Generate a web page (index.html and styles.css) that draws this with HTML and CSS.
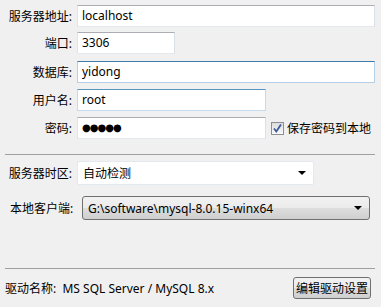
FILE: index.html
```html
<!DOCTYPE html>
<html lang="zh-CN">

<head>
    <meta charset="UTF-8">
    <meta name="viewport" content="width=device-width, initial-scale=1.0">
    <title>连接设置</title>
    <link rel="stylesheet" href="styles.css">
</head>

<body>
    <div class="panel">
        <div class="row row-host">
            <label class="lbl" for="host">服务器地址:</label>
            <div class="field wide" id="host">localhost</div>
        </div>
        <div class="row row-port">
            <label class="lbl" for="port">端口:</label>
            <div class="field short" id="port">3306</div>
        </div>
        <div class="row row-db">
            <label class="lbl" for="db">数据库:</label>
            <div class="field wide focus" id="db">yidong</div>
        </div>
        <div class="row row-user">
            <label class="lbl" for="user">用户名:</label>
            <div class="field mid hover" id="user">root</div>
        </div>
        <div class="row row-pass">
            <label class="lbl" for="pass">密码:</label>
            <div class="field mid dots" id="pass">●●●●●</div>
            <div class="check">
                <span class="box">
                    <svg width="11" height="11" viewBox="0 0 11 11">
                        <path d="M2 5.5 L4.3 8.5 L9 1.5" fill="none" stroke="#3b5a9a" stroke-width="1.8" />
                    </svg>
                </span>
                <span>保存密码到本地</span>
            </div>
        </div>

        <hr class="sep sep-top">

        <div class="row row-tz">
            <label class="lbl">服务器时区:</label>
            <div class="combo flat">
                <span>自动检测</span>
                <span class="arrow"></span>
            </div>
        </div>
        <div class="row row-client">
            <label class="lbl lbl-left">本地客户端:</label>
            <div class="combo raised">
                <span>G:\software\mysql-8.0.15-winx64</span>
                <span class="arrow"></span>
            </div>
        </div>

        <hr class="sep sep-bottom">

        <div class="footer">
            <span>驱动名称:&nbsp; MS SQL Server / MySQL 8.x</span>
            <button class="btn">编辑驱动设置</button>
        </div>
    </div>
</body>

</html>
```

FILE: styles.css
```css
html,
body {
    margin: 0;
    background: #f0f0f0;
}

body {
    font-family: "Segoe UI", "Noto Sans", "Noto Sans CJK SC", sans-serif;
    font-size: 12px;
    color: #000;
}

.panel {
    width: 381px;
    height: 307px;
    padding-top: 5px;
    box-sizing: border-box;
}

.row {
    display: flex;
    align-items: center;
}

.lbl {
    width: 67px;
    margin-left: 5px;
    margin-right: 5px;
    text-align: right;
    white-space: nowrap;
}

.lbl-left {
    width: 67px;
    margin-left: 10px;
    text-align: left;
}

.field {
    height: 22px;
    box-sizing: border-box;
    background: #fff;
    border: 1px solid #e3e9ef;
    border-top-color: #abadb3;
    border-left-color: #e2e3ea;
    border-right-color: #dbdfe6;
    padding: 0 4px;
    line-height: 20px;
}

.field.focus {
    border-color: #b5cfe7;
    border-top-color: #3d7bad;
}

.field.hover {
    border-color: #c5daed;
    border-top-color: #5794bf;
}

.wide {
    width: 298px;
}

.short {
    width: 98px;
}

.mid {
    width: 189px;
}

.dots {
    font-family: "DejaVu Sans", sans-serif;
    font-size: 10px;
    letter-spacing: -1px;
}

.row-host {
    margin-bottom: 5px;
}

.row-port {
    margin-bottom: 7px;
}

.row-db,
.row-user {
    margin-bottom: 6px;
}

.check {
    display: flex;
    align-items: center;
    margin-left: 5px;
    gap: 3px;
}

.box {
    width: 11px;
    height: 11px;
    border: 1px solid #8f8f8f;
    background: linear-gradient(#dcdcdc, #fafafa);
    display: flex;
}

.sep {
    margin: 0 6px 0 5px;
    border: 0;
    border-top: 1px solid #a0a0a0;
    height: 0;
}

.sep-top {
    margin-top: 15px;
    margin-bottom: 6px;
}

.combo {
    height: 24px;
    box-sizing: border-box;
    display: flex;
    align-items: center;
    justify-content: space-between;
    padding: 0 4px 0 5px;
}

.flat {
    width: 237px;
    background: #fff;
    border: 1px solid #e3e9ef;
    border-radius: 2px;
}

.raised {
    width: 288px;
    border: 1px solid #707070;
    border-radius: 3px;
    background: linear-gradient(#f2f2f2 0%, #ebebeb 50%, #dddddd 51%, #cfcfcf 100%);
}

.arrow {
    width: 0;
    height: 0;
    border-left: 4px solid transparent;
    border-right: 4px solid transparent;
    border-top: 4px solid #000;
    margin-right: 3px;
}

.row-tz {
    margin-bottom: 11px;
}

.row-client .lbl {
    margin-right: 5px;
}

.sep-bottom {
    margin-top: 48px;
    margin-bottom: 8px;
}

.footer {
    display: flex;
    align-items: center;
    justify-content: space-between;
    margin: 0 10px 0 5px;
}

.btn {
    width: 78px;
    height: 22px;
    padding: 0;
    font: inherit;
    color: #000;
    border: 1px solid #707070;
    border-radius: 3px;
    background: linear-gradient(#f2f2f2 0%, #ebebeb 50%, #dddddd 51%, #cfcfcf 100%);
}
```
